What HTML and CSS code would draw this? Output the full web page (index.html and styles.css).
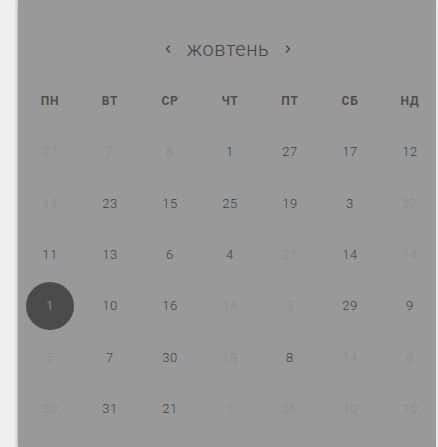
FILE: index.html
```html
<!DOCTYPE html>
<html lang="uk">
<head>
<meta charset="utf-8">
<link rel="stylesheet" href="styles.css">
</head>
<body>
<div class="panel">
  <div class="title">
    <span class="chev"><svg width="8" height="10" viewBox="0 0 8 10"><path d="M6 1.5 L2.5 5 L6 8.5" fill="none" stroke="#444" stroke-width="1.3"/></svg></span>
    <span class="month">жовтень</span>
    <span class="chev"><svg width="8" height="10" viewBox="0 0 8 10"><path d="M2 1.5 L5.5 5 L2 8.5" fill="none" stroke="#444" stroke-width="1.3"/></svg></span>
  </div>
  <div class="grid">
    <div class="hd">ПН</div><div class="hd">ВТ</div><div class="hd">СР</div><div class="hd">ЧТ</div><div class="hd">ПТ</div><div class="hd">СБ</div><div class="hd">НД</div>

    <div class="d off">27</div><div class="d off">7</div><div class="d off">8</div><div class="d">1</div><div class="d">27</div><div class="d">17</div><div class="d">12</div>
    <div class="d off">14</div><div class="d">23</div><div class="d">15</div><div class="d">25</div><div class="d">19</div><div class="d">3</div><div class="d off">27</div>
    <div class="d">11</div><div class="d">13</div><div class="d">6</div><div class="d">4</div><div class="d off">21</div><div class="d">14</div><div class="d off">14</div>
    <div class="d sel"><span class="dot">1</span></div><div class="d">10</div><div class="d">16</div><div class="d off">14</div><div class="d off">3</div><div class="d">29</div><div class="d">9</div>
    <div class="d off">5</div><div class="d">7</div><div class="d">30</div><div class="d off">18</div><div class="d">8</div><div class="d off">14</div><div class="d off">6</div>
    <div class="d off">30</div><div class="d">31</div><div class="d">21</div><div class="d off">1</div><div class="d off">26</div><div class="d off">10</div><div class="d off">10</div>
  </div>
</div>
</body>
</html>
```
FILE: styles.css
```css
html, body {
  margin: 0;
  padding: 0;
}
body {
  background: #eeeeee;
  width: 438px;
  height: 447px;
  overflow: hidden;
  font-family: Roboto, "Noto Sans", sans-serif;
}
.panel {
  margin-left: 18px;
  width: 418px;
  height: 447px;
  background: #999999;
  box-shadow: -1px 0 3px rgba(0,0,0,0.25);
  padding-left: 2px;
  box-sizing: border-box;
}
.title {
  display: flex;
  align-items: center;
  justify-content: center;
  gap: 15px;
  height: 24px;
  padding-top: 37px;
  padding-bottom: 15px;
  width: 420px;
  margin-left: -2px;
}
.month {
  font-size: 20px;
  font-weight: 300;
  letter-spacing: 0.6px;
  color: #454545;
  line-height: 24px;
}
.chev {
  display: flex;
  align-items: center;
}
.grid {
  display: grid;
  grid-template-columns: repeat(7, 60px);
  grid-template-rows: 50px;
  grid-auto-rows: 51.4px;
  width: 420px;
}
.hd {
  display: flex;
  align-items: center;
  justify-content: center;
  font-size: 12px;
  font-weight: bold;
  letter-spacing: 0.8px;
  color: #4e4e4e;
}
.d {
  display: flex;
  align-items: center;
  justify-content: center;
  font-size: 13px;
  font-weight: 300;
  letter-spacing: 0.6px;
  color: #404040;
}
.d.off {
  color: #8a8a8a;
}
.dot {
  width: 48px;
  height: 48px;
  border-radius: 50%;
  background: #4b4b4b;
  color: #a8a8a8;
  display: flex;
  align-items: center;
  justify-content: center;
}
```
